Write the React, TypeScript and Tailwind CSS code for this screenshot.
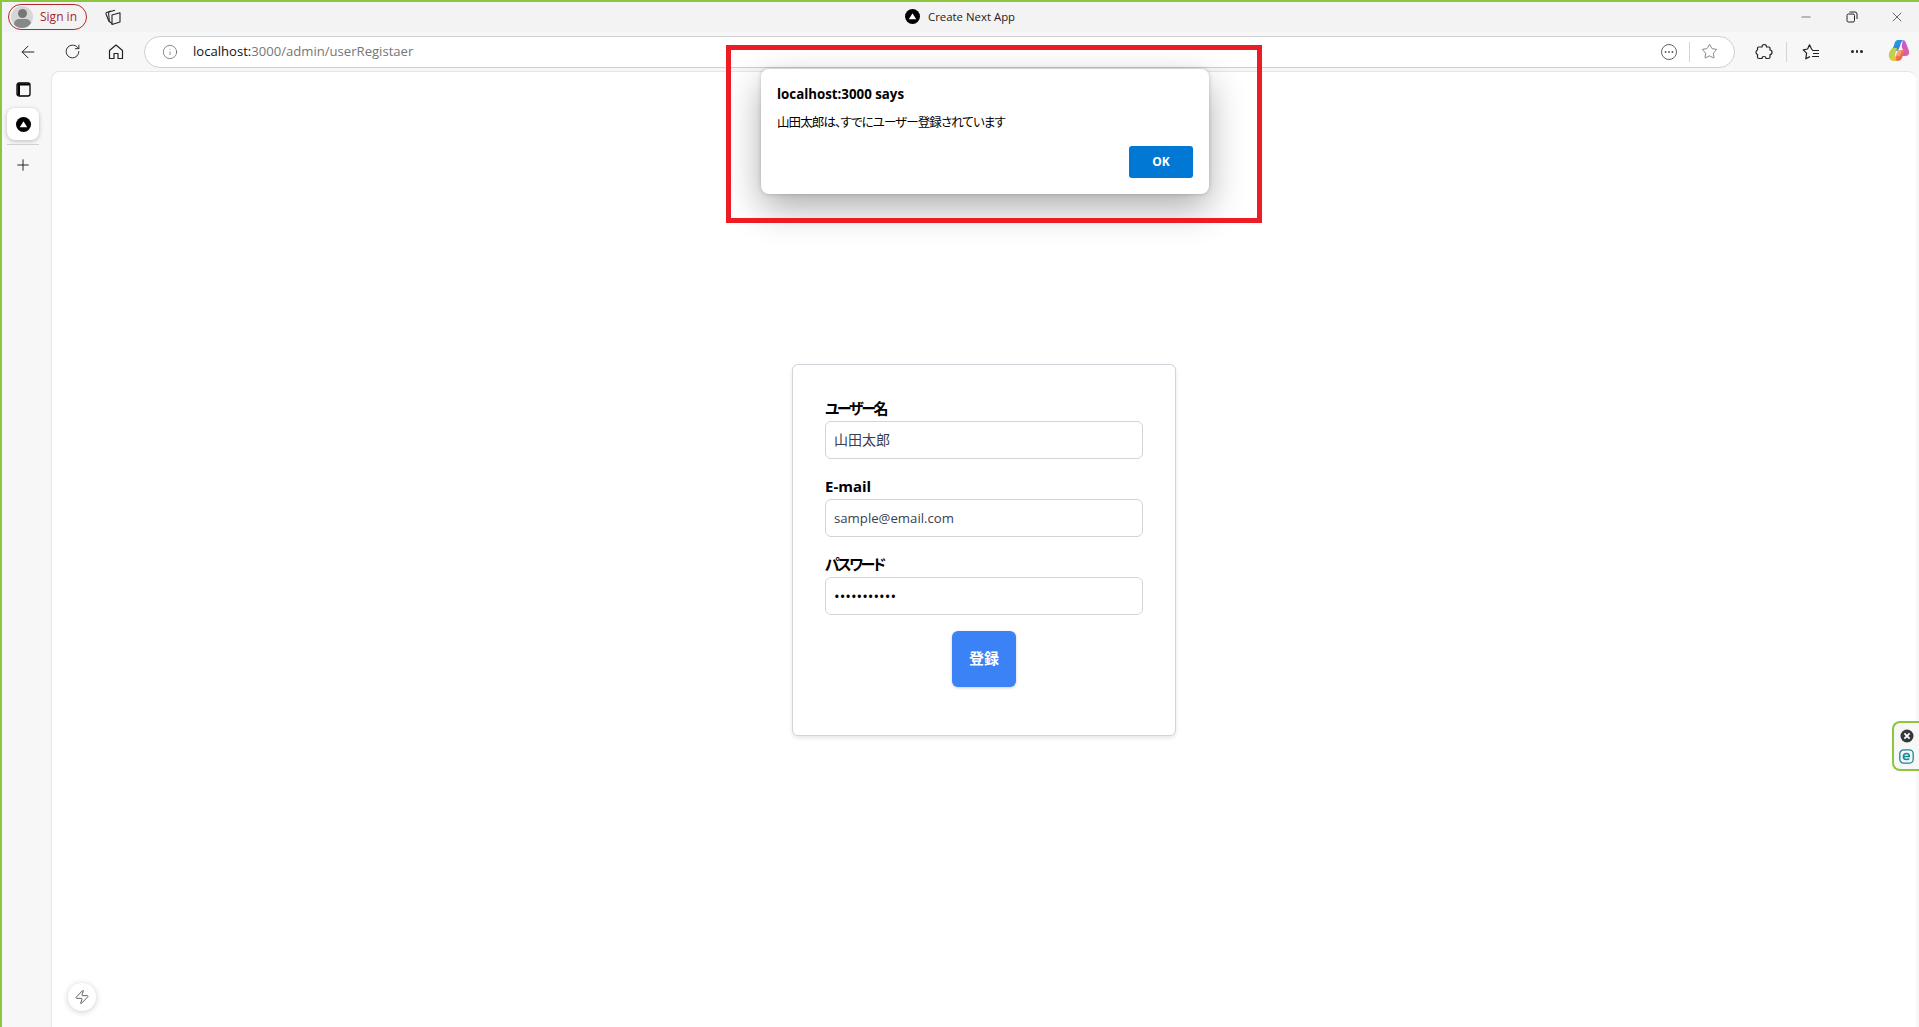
import { ArrowLeft, RotateCw, Plus, Minus, X, Star, Zap, Info } from "lucide-react";

const FONT = "font-['Segoe_UI','Open_Sans','Noto_Sans','Noto_Sans_CJK_JP',sans-serif] [font-feature-settings:'palt']";

function NextLogo({ size }: { size: number }) {
  return (
    <svg width={size} height={size} viewBox="0 0 16 16">
      <circle cx="8" cy="8" r="8" fill="#000" />
      <path d="M8 4.4 L12 11 H4 Z" fill="#fff" />
    </svg>
  );
}

function Collections() {
  return (
    <svg width="18" height="18" viewBox="0 0 18 18" fill="none" stroke="#222" strokeWidth="1.1" strokeLinejoin="round">
      <path d="M5 13.5 L2 6 Q1.7 5 2.7 4.6 L7 3" />
      <path d="M8 15.5 L5.3 13.5 L4.6 5 Q4.6 4 5.6 3.7 L11 2.2" />
      <path d="M8 7 L16 4.8 V14 L8 16.5 Z" />
    </svg>
  );
}

function PanelIcon() {
  return (
    <svg width="15" height="15" viewBox="0 0 15 15" fill="none">
      <rect x="1" y="1" width="13" height="13" rx="2" stroke="#000" strokeWidth="1.3" />
      <path d="M1.5 1.5 H13.5 V3.4 H4 V13.5 H1.5 Z" fill="#000" />
    </svg>
  );
}

function HomeIcon() {
  return (
    <svg width="18" height="18" viewBox="0 0 18 18" fill="none" stroke="#222" strokeWidth="1.2" strokeLinejoin="round">
      <path d="M2.5 7.5 L9 2 L15.5 7.5 V15.5 H11 V10.5 H7 V15.5 H2.5 Z" />
    </svg>
  );
}

function DotsCircle() {
  return (
    <svg width="18" height="18" viewBox="0 0 18 18" fill="none">
      <circle cx="9" cy="9" r="7.5" stroke="#666" strokeWidth="1" />
      <circle cx="5.6" cy="9" r="0.9" fill="#555" />
      <circle cx="9" cy="9" r="0.9" fill="#555" />
      <circle cx="12.4" cy="9" r="0.9" fill="#555" />
    </svg>
  );
}

function PuzzleIcon() {
  return (
    <svg width="18" height="18" viewBox="0 0 18 18" fill="none" stroke="#222" strokeWidth="1.2" strokeLinejoin="round">
      <path d="M7 4 Q7 1.5 9.3 1.5 Q11.5 1.5 11.5 4 H14 Q15 4 15 5 V7 Q17 7 17 9.2 Q17 11.5 15 11.5 V14 Q15 15.5 13.5 15.5 H11 Q11 13.5 9 13.5 Q7 13.5 7 15.5 H4 Q2.5 15.5 2.5 14 V11.5 Q1 11 1 9.2 Q1 7.5 2.5 7 V5 Q2.5 4 3.5 4 Z" />
    </svg>
  );
}

function FavoritesIcon() {
  return (
    <svg width="18" height="18" viewBox="0 0 18 18" fill="none" stroke="#222" strokeWidth="1.2" strokeLinejoin="round">
      <path d="M10.8 7.6 L9.6 6 L7.5 1.8 L5.6 6 L1.2 6.8 L4.6 10.2 L3.8 15.8 L8 13.6" />
      <path d="M11 7.5 H17 M11 10.5 H17 M10 13.5 H17" />
    </svg>
  );
}

function CopilotLogo() {
  return (
    <svg width="22" height="26" viewBox="0 0 22 26">
      <defs>
        <linearGradient id="cpA" x1="0" y1="0" x2="1" y2="1">
          <stop offset="0" stopColor="#1ea7e8" />
          <stop offset="1" stopColor="#3b6fe0" />
        </linearGradient>
        <linearGradient id="cpB" x1="0" y1="0" x2="1" y2="1">
          <stop offset="0" stopColor="#b85ce0" />
          <stop offset="1" stopColor="#e85c9c" />
        </linearGradient>
        <linearGradient id="cpC" x1="0" y1="0" x2="1" y2="1">
          <stop offset="0" stopColor="#a4d65e" />
          <stop offset="1" stopColor="#f2c230" />
        </linearGradient>
        <linearGradient id="cpD" x1="0" y1="0" x2="1" y2="1">
          <stop offset="0" stopColor="#f59a3a" />
          <stop offset="1" stopColor="#e8486a" />
        </linearGradient>
      </defs>
      <path d="M7 3 Q8 1 10 1 H15 Q13 3 12 7 L10 12 H4 Z" fill="url(#cpA)" />
      <path d="M15 1 Q17 1 18 4 L21 12 Q22 17 17 17 H13 L15 11 Q13 8 14 5 Z" fill="url(#cpB)" />
      <path d="M4 9 H9 L7 16 Q6 21 10 22 H6 Q2 22 1 18 Q0 14 4 9 Z" fill="url(#cpC)" />
      <path d="M10 11 H17 L14 19 Q13 22 9 22 Q6 20 8 16 Z" fill="url(#cpD)" />
      <path d="M9 10 H14 L12 17 H7.5 Z" fill="#fff" fillOpacity="0.25" />
    </svg>
  );
}

function RestoreIcon() {
  return (
    <svg width="12" height="12" viewBox="0 0 12 12" fill="none" stroke="#222" strokeWidth="1">
      <rect x="1" y="3" width="7.5" height="8" rx="1.5" />
      <path d="M3.5 1 H9 Q11 1 11 3 V8" />
    </svg>
  );
}

function EsetIcon() {
  return (
    <svg width="15" height="15" viewBox="0 0 15 15" fill="none">
      <rect x="0.8" y="0.8" width="13.4" height="13.4" rx="4" stroke="#0f8a96" strokeWidth="1.3" />
      <path d="M4.6 7.6 H10.4 Q10.4 4.4 7.5 4.4 Q4.4 4.4 4.4 7.5 Q4.4 10.6 7.6 10.6 Q9.3 10.6 10.2 9.6" stroke="#0f8a96" strokeWidth="1.5" />
    </svg>
  );
}

function CloseBadge() {
  return (
    <svg width="14" height="14" viewBox="0 0 14 14">
      <circle cx="7" cy="7" r="6.5" fill="#33383d" />
      <path d="M4.4 4.4 L9.6 9.6 M9.6 4.4 L4.4 9.6" stroke="#fff" strokeWidth="1.8" />
    </svg>
  );
}

function Field({ label, children, tight }: { label: string; children: React.ReactNode; tight?: boolean }) {
  return (
    <div className="mb-4">
      <label className={`block h-6 text-[15px] leading-[22px] font-bold text-black ${tight ? "tracking-[-2.4px]" : ""}`}>{label}</label>
      {children}
    </div>
  );
}

const INPUT = "block h-[38px] w-full rounded-md border border-[#d1d5db] px-2 outline-none";

export default function App() {
  return (
    <div className={`relative flex h-[1027px] w-full flex-col overflow-hidden border-t-2 border-l-2 border-[#8cc63f] bg-[#f7f7f7] ${FONT}`}>
      {/* Title bar */}
      <div className="flex h-[30px] shrink-0 items-center bg-[#f3f3f3]">
        <div className="ml-[6px] flex h-[26px] w-[79px] items-center gap-[7px] rounded-full border border-[#b3262b] pl-[2px]">
          <div className="relative h-[22px] w-[22px] overflow-hidden rounded-full bg-[#d6d6d6]">
            <div className="mx-auto mt-[3px] h-[9px] w-[9px] rounded-full bg-[#777]" />
            <div className="mx-auto mt-[1px] h-[10px] w-[17px] rounded-full bg-[#888]" />
          </div>
          <span className="text-[12px] text-[#a4262c]">Sign in</span>
        </div>
        <div className="ml-[17px] flex w-[18px] items-center justify-center">
          <Collections />
        </div>
        <div className="ml-[783px] flex items-center gap-[8px]">
          <NextLogo size={15} />
          <span className="text-[11.4px] text-[#222]">Create Next App</span>
        </div>
        <div className="ml-auto flex items-center">
          <div className="flex w-[46px] justify-center"><Minus size={14} strokeWidth={1} color="#222" /></div>
          <div className="flex w-[46px] justify-center"><RestoreIcon /></div>
          <div className="flex w-[44px] justify-center"><X size={16} strokeWidth={1} color="#222" /></div>
        </div>
      </div>

      {/* Toolbar */}
      <div className="flex h-[39px] shrink-0 items-center">
        <div className="ml-[4px] flex w-[44px] justify-center"><ArrowLeft size={20} strokeWidth={1.2} color="#222" /></div>
        <div className="flex w-[44px] justify-center"><RotateCw size={17} strokeWidth={1.3} color="#222" /></div>
        <div className="flex w-[44px] justify-center"><HomeIcon /></div>
        <div className="ml-[6px] flex h-[32px] w-[1591px] items-center rounded-full border border-[#cfcfcf] bg-white pr-[10px] pl-[17px]">
          <Info size={16} strokeWidth={1} color="#555" />
          <span className="ml-[15px] pt-px text-[13.1px] text-[#111]">
            localhost:<span className="text-[#767676]">3000/admin/userRegistaer</span>
          </span>
          <div className="ml-auto"><DotsCircle /></div>
          <div className="mx-[11px] h-[20px] w-px bg-[#d4d4d4]" />
          <Star size={17} strokeWidth={1} color="#555" />
          <div className="w-[6px]" />
        </div>
        <div className="ml-[20px] flex w-[18px] justify-center"><PuzzleIcon /></div>
        <div className="mx-[13px] h-[20px] w-px bg-[#d4d4d4]" />
        <div className="ml-[2px] flex w-[18px] justify-center"><FavoritesIcon /></div>
        <div className="ml-[28px] flex w-[18px] items-center justify-center gap-[2px]">
          <span className="h-[2.5px] w-[2.5px] rounded-full bg-[#222]" />
          <span className="h-[2.5px] w-[2.5px] rounded-full bg-[#222]" />
          <span className="h-[2.5px] w-[2.5px] rounded-full bg-[#222]" />
        </div>
        <div className="ml-[22px]"><CopilotLogo /></div>
      </div>

      {/* Body */}
      <div className="flex min-h-0 flex-1">
        <div className="flex w-[49px] shrink-0 flex-col items-center pr-[7px]">
          <div className="mt-[10px] flex h-[16px] items-center justify-center"><PanelIcon /></div>
          <div className="mt-[11px] flex h-[32px] w-[32px] items-center justify-center rounded-lg bg-white shadow-[0_1px_4px_rgba(0,0,0,0.25)]">
            <NextLogo size={15} />
          </div>
          <div className="mt-[4px] h-px w-[32px] bg-[#d0d0d0]" />
          <div className="mt-[11px]"><Plus size={18} strokeWidth={1.2} color="#111" /></div>
        </div>
        <main className="relative mr-[3px] flex min-w-0 flex-1 items-center justify-center rounded-tl-lg rounded-tr-lg border-t border-l border-[#e6e6e6] bg-white">
          <div className="h-[372px] w-[384px] rounded-md border border-[#d1d5db] bg-white px-8 pt-8 shadow-[0_2px_4px_rgba(0,0,0,0.1)]">
            <Field label="ユーザー名" tight>
              <input readOnly type="text" value="山田太郎" className={`${INPUT} pb-[2px] text-[14px] text-[#374151]`} />
            </Field>
            <Field label="E-mail">
              <input readOnly type="text" value="sample@email.com" className={`${INPUT} text-[13.2px] text-[#374151]`} />
            </Field>
            <Field label="パスワード" tight>
              <input readOnly type="password" value="password123" className={`${INPUT} text-[15px] text-black`} />
            </Field>
            <div className="flex justify-center">
              <button className="h-14 w-16 rounded-md bg-[#3b82f6] text-[15px] font-bold text-white shadow-[0_1px_3px_rgba(0,0,0,0.2)]">
                登録
              </button>
            </div>
          </div>

          <div className="absolute bottom-[16px] left-[16px] flex h-[28px] w-[28px] items-center justify-center rounded-full bg-white shadow-[0_1px_6px_rgba(0,0,0,0.2)]">
            <Zap size={16} strokeWidth={1.4} color="#555" />
          </div>
        </main>
      </div>

      {/* alert dialog, over the page */}
      <div className="absolute top-[67px] left-[759px] h-[125px] w-[448px] rounded-lg bg-white px-4 pt-4 shadow-[0_14px_36px_rgba(0,0,0,0.32),0_0_4px_rgba(0,0,0,0.2)]">
        <div className="text-[13.3px] leading-[18px] font-bold text-black">localhost:3000 says</div>
        <div className="mt-[11px] text-[12.5px] leading-[18px] tracking-[-0.9px] text-black">山田太郎は、すでにユーザー登録されています</div>
        <div className="mt-[14px] flex justify-end">
          <button className="h-[32px] w-16 rounded-[3px] bg-[#0078d4] text-[12px] font-bold text-white">OK</button>
        </div>
      </div>

      {/* red annotation frame */}
      <div className="pointer-events-none absolute top-[43px] left-[724px] h-[178px] w-[536px] border-[5px] border-[#ed1c24]" />

      {/* extension widget on the right edge */}
      <div className="absolute top-[719px] right-0 flex h-[50px] w-[27px] flex-col items-center justify-center gap-[6px] rounded-l-lg border-2 border-r-0 border-[#8cc63f] bg-[#f7f7f7]">
        <CloseBadge />
        <EsetIcon />
      </div>
    </div>
  );
}
